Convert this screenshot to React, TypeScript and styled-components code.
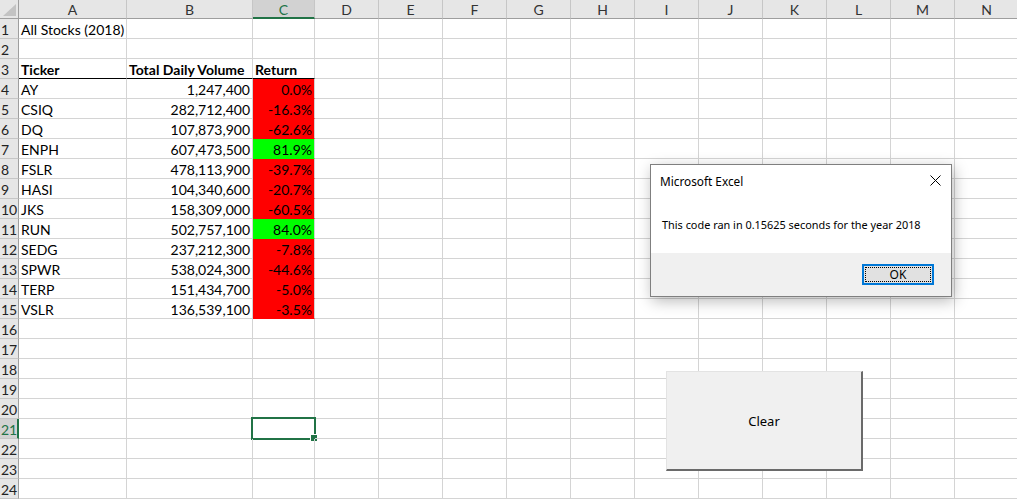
import React from "react";
import styled, { createGlobalStyle, css } from "styled-components";

const GlobalStyle = createGlobalStyle`
  html, body { margin: 0; padding: 0; background: #ffffff; overflow: hidden; }
  body { font-family: Lato, "Open Sans", sans-serif; }
  * { box-sizing: border-box; }
`;

const CELL_FONT = `Lato, "Open Sans", sans-serif`;
const UI_FONT = `"Noto Sans", "Open Sans", sans-serif`;

const Sheet = styled.div`
  position: relative;
  width: 1017px;
  height: 499px;
  overflow: hidden;
  background: #fff;
`;

const Grid = styled.div`
  display: grid;
  grid-template-columns: 19px 108px 126px 62px repeat(11, 64px);
  grid-template-rows: 19px repeat(24, 20px);
  width: 1018px;
  font-family: ${CELL_FONT};
  font-size: 14px;
  color: #000;
`;

const Corner = styled.div`
  position: relative;
  background: #e6e6e6;
  border-right: 1px solid #9e9e9e;
  border-bottom: 1px solid #9e9e9e;
  &::after {
    content: "";
    position: absolute;
    right: 2px;
    bottom: 2px;
    width: 0;
    height: 0;
    border-left: 13px solid transparent;
    border-bottom: 12px solid #c3c3c3;
  }
`;

const ColHeader = styled.div<{ $active?: boolean }>`
  display: flex;
  align-items: center;
  justify-content: center;
  background: #e6e6e6;
  border-right: 1px solid #c6c6c6;
  border-bottom: 1px solid #9e9e9e;
  color: #333;
  font-size: 14px;
  padding-top: 1px;
  ${(p) =>
    p.$active &&
    css`
      background: #d2d2d2;
      color: #217346;
      border-bottom: 2px solid #217346;
      padding-top: 2px;
    `}
`;

const RowHeader = styled.div<{ $active?: boolean }>`
  display: flex;
  align-items: center;
  justify-content: flex-start;
  background: #e6e6e6;
  border-right: 1px solid #9e9e9e;
  border-bottom: 1px solid #c6c6c6;
  color: #222;
  font-size: 14px;
  padding: 1px 0 0 1px;
  overflow: hidden;
  ${(p) =>
    p.$active &&
    css`
      background: #d2d2d2;
      color: #217346;
      border-right: 2px solid #217346;
    `}
`;

const Cell = styled.div<{
  $align?: "left" | "right";
  $fill?: string;
  $bold?: boolean;
  $rule?: boolean;
}>`
  position: relative;
  display: flex;
  align-items: center;
  justify-content: ${(p) => (p.$align === "right" ? "flex-end" : "flex-start")};
  padding: 2px 2px 0 2px;
  white-space: nowrap;
  border-right: 1px solid #d4d4d4;
  border-bottom: 1px solid ${(p) => (p.$rule ? "#000" : p.$fill || "#d4d4d4")};
  background: ${(p) => p.$fill || "transparent"};
  font-weight: ${(p) => (p.$bold ? 700 : 400)};
`;

const Selection = styled.div`
  position: absolute;
  top: -2px;
  left: -2px;
  right: -2px;
  bottom: -2px;
  border: 2px solid #217346;
  pointer-events: none;
  &::after {
    content: "";
    position: absolute;
    right: -4px;
    bottom: -4px;
    width: 6px;
    height: 6px;
    background: #217346;
    border: 1px solid #fff;
  }
`;

const Dialog = styled.div`
  position: absolute;
  left: 650px;
  top: 164px;
  width: 302px;
  height: 133px;
  display: flex;
  flex-direction: column;
  background: #fff;
  border: 1px solid #7f7f7f;
  box-shadow: 2px 4px 14px rgba(0, 0, 0, 0.28);
  font-family: ${UI_FONT};
  font-size: 10.9px;
  color: #000;
`;

const TitleBar = styled.div`
  height: 31px;
  display: flex;
  align-items: center;
  justify-content: space-between;
  padding: 0 10px 0 9px;
  font-size: 11.8px;
`;

const CloseIcon = styled.svg`
  width: 11px;
  height: 11px;
  display: block;
`;

const Message = styled.div`
  flex: 1;
  display: flex;
  align-items: center;
  padding-left: 11px;
`;

const Footer = styled.div`
  height: 43px;
  display: flex;
  align-items: flex-start;
  justify-content: flex-end;
  background: #f0f0f0;
  padding: 11px 17px 0 0;
`;

const OkButton = styled.div`
  width: 72px;
  height: 21px;
  border: 2px solid #0078d7;
  background: #e1e1e1;
  padding: 1px;
  display: flex;
`;

const OkFocus = styled.div`
  flex: 1;
  border: 1px dotted #000;
  display: flex;
  align-items: center;
  justify-content: center;
  font-size: 12px;
`;

const ClearButton = styled.div`
  position: absolute;
  left: 666px;
  top: 371px;
  width: 197px;
  height: 100px;
  display: flex;
  align-items: center;
  justify-content: center;
  background: #f0f0f0;
  border-top: 1px solid #e3e3e3;
  border-left: 1px solid #e3e3e3;
  border-right: 2px solid #6a6a6a;
  border-bottom: 2px solid #6a6a6a;
  font-family: ${UI_FONT};
  font-size: 13px;
  color: #000;
`;

type Stock = { t: string; v: string; r: string; up: boolean };

const stocks: Stock[] = [
  { t: "AY", v: "1,247,400", r: "0.0%", up: false },
  { t: "CSIQ", v: "282,712,400", r: "-16.3%", up: false },
  { t: "DQ", v: "107,873,900", r: "-62.6%", up: false },
  { t: "ENPH", v: "607,473,500", r: "81.9%", up: true },
  { t: "FSLR", v: "478,113,900", r: "-39.7%", up: false },
  { t: "HASI", v: "104,340,600", r: "-20.7%", up: false },
  { t: "JKS", v: "158,309,000", r: "-60.5%", up: false },
  { t: "RUN", v: "502,757,100", r: "84.0%", up: true },
  { t: "SEDG", v: "237,212,300", r: "-7.8%", up: false },
  { t: "SPWR", v: "538,024,300", r: "-44.6%", up: false },
  { t: "TERP", v: "151,434,700", r: "-5.0%", up: false },
  { t: "VSLR", v: "136,539,100", r: "-3.5%", up: false },
];

const columns = ["A", "B", "C", "D", "E", "F", "G", "H", "I", "J", "K", "L", "M", "N"];

type CellData = {
  text?: string;
  align?: "left" | "right";
  fill?: string;
  bold?: boolean;
  rule?: boolean;
  selected?: boolean;
};

function cellFor(row: number, col: number): CellData {
  if (row === 1 && col === 0) return { text: "All Stocks (2018)" };
  if (row === 3 && col <= 2) {
    const labels = ["Ticker", "Total Daily Volume", "Return"];
    return { text: labels[col], bold: true, rule: true };
  }
  if (row >= 4 && row <= 15 && col <= 2) {
    const s = stocks[row - 4];
    if (col === 0) return { text: s.t };
    if (col === 1) return { text: s.v, align: "right" };
    return { text: s.r, align: "right", fill: s.up ? "#00ff00" : "#ff0000" };
  }
  if (row === 21 && col === 2) return { selected: true };
  return {};
}

export default function App() {
  const rows = Array.from({ length: 24 }, (_, i) => i + 1);
  return (
    <>
      <GlobalStyle />
      <Sheet>
        <Grid>
          <Corner />
          {columns.map((c) => (
            <ColHeader key={c} $active={c === "C"}>
              {c}
            </ColHeader>
          ))}
          {rows.map((r) => (
            <React.Fragment key={r}>
              <RowHeader $active={r === 21}>{r}</RowHeader>
              {columns.map((c, ci) => {
                const d = cellFor(r, ci);
                return (
                  <Cell
                    key={c}
                    $align={d.align}
                    $fill={d.fill}
                    $bold={d.bold}
                    $rule={d.rule}
                  >
                    {d.text}
                    {d.selected && <Selection />}
                  </Cell>
                );
              })}
            </React.Fragment>
          ))}
        </Grid>

        <ClearButton>Clear</ClearButton>

        <Dialog>
          <TitleBar>
            <span>Microsoft Excel</span>
            <CloseIcon viewBox="0 0 11 11">
              <path d="M0.5 0.5 L10.5 10.5 M10.5 0.5 L0.5 10.5" stroke="#000" strokeWidth="1" fill="none" />
            </CloseIcon>
          </TitleBar>
          <Message>This code ran in 0.15625 seconds for the year 2018</Message>
          <Footer>
            <OkButton>
              <OkFocus>OK</OkFocus>
            </OkButton>
          </Footer>
        </Dialog>
      </Sheet>
    </>
  );
}
